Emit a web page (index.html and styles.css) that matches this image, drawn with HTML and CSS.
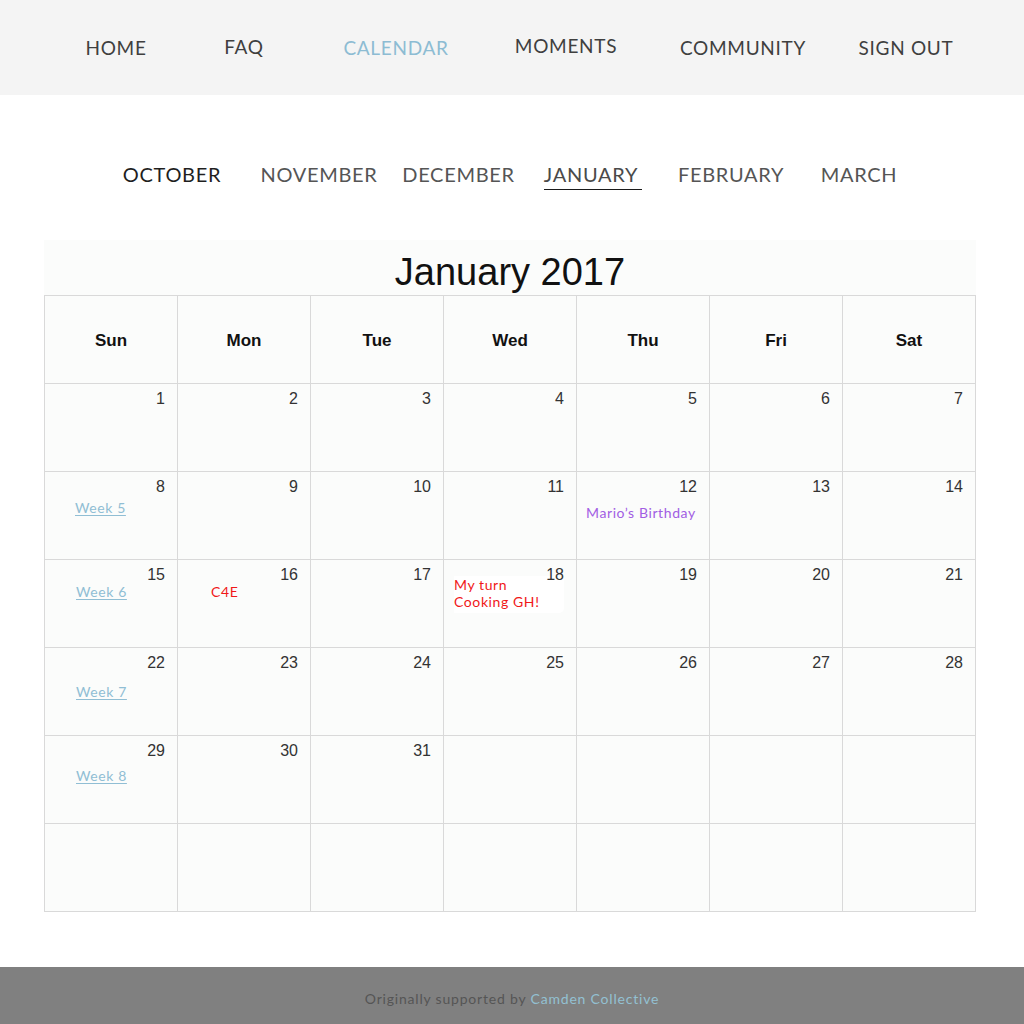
FILE: index.html
```html
<!DOCTYPE html>
<html lang="en">
<head>
<meta charset="utf-8">
<title>Calendar</title>
<link rel="stylesheet" href="styles.css">
</head>
<body>
<header class="topbar">
  <nav class="mainnav">
    <a class="navlink">HOME</a>
    <a class="navlink up1">FAQ</a>
    <a class="navlink active">CALENDAR</a>
    <a class="navlink up2">MOMENTS</a>
    <a class="navlink">COMMUNITY</a>
    <a class="navlink">SIGN OUT</a>
  </nav>
</header>
<main class="content">
  <nav class="months">
    <a class="month dark">OCTOBER</a>
    <a class="month">NOVEMBER</a>
    <a class="month">DECEMBER</a>
    <a class="month current">JANUARY</a>
    <a class="month">FEBRUARY</a>
    <a class="month">MARCH</a>
  </nav>
  <section class="calendar">
    <h1 class="cal-title">January 2017</h1>
    <div class="grid">
      <div class="dow">Sun</div><div class="dow">Mon</div><div class="dow">Tue</div><div class="dow">Wed</div><div class="dow">Thu</div><div class="dow">Fri</div><div class="dow">Sat</div>

      <div class="cell"><span class="num">1</span></div>
      <div class="cell"><span class="num">2</span></div>
      <div class="cell"><span class="num">3</span></div>
      <div class="cell"><span class="num">4</span></div>
      <div class="cell"><span class="num">5</span></div>
      <div class="cell"><span class="num">6</span></div>
      <div class="cell"><span class="num">7</span></div>

      <div class="cell"><span class="num">8</span><a class="week w5">Week 5</a></div>
      <div class="cell"><span class="num">9</span></div>
      <div class="cell"><span class="num">10</span></div>
      <div class="cell"><span class="num">11</span></div>
      <div class="cell"><span class="num">12</span><span class="event purple">Mario’s Birthday</span></div>
      <div class="cell"><span class="num">13</span></div>
      <div class="cell"><span class="num">14</span></div>

      <div class="cell"><span class="num">15</span><a class="week w6">Week 6</a></div>
      <div class="cell"><span class="num">16</span><span class="event red c4e">C4E</span></div>
      <div class="cell"><span class="num">17</span></div>
      <div class="cell"><span class="num">18</span><span class="event red cook">My turn<br>Cooking GH!</span></div>
      <div class="cell"><span class="num">19</span></div>
      <div class="cell"><span class="num">20</span></div>
      <div class="cell"><span class="num">21</span></div>

      <div class="cell"><span class="num">22</span><a class="week w7">Week 7</a></div>
      <div class="cell"><span class="num">23</span></div>
      <div class="cell"><span class="num">24</span></div>
      <div class="cell"><span class="num">25</span></div>
      <div class="cell"><span class="num">26</span></div>
      <div class="cell"><span class="num">27</span></div>
      <div class="cell"><span class="num">28</span></div>

      <div class="cell"><span class="num">29</span><a class="week w8">Week 8</a></div>
      <div class="cell"><span class="num">30</span></div>
      <div class="cell"><span class="num">31</span></div>
      <div class="cell"></div>
      <div class="cell"></div>
      <div class="cell"></div>
      <div class="cell"></div>

      <div class="cell"></div>
      <div class="cell"></div>
      <div class="cell"></div>
      <div class="cell"></div>
      <div class="cell"></div>
      <div class="cell"></div>
      <div class="cell"></div>
    </div>
  </section>
</main>
<footer class="footer">
  <p>Originally supported by <a class="footlink">Camden Collective</a></p>
</footer>
</body>
</html>
```

FILE: styles.css
```css
html, body {
  margin: 0;
  padding: 0;
  background: #ffffff;
}
body {
  font-family: "Lato", "Open Sans", sans-serif;
  width: 1024px;
  height: 1024px;
  overflow: hidden;
}
a { text-decoration: none; cursor: pointer; }

.topbar {
  height: 95px;
  background: #f4f4f4;
}
.mainnav {
  display: grid;
  grid-template-columns: 128px 128px 176px 164px 190px 136px;
  padding-left: 52px;
  height: 95px;
  align-items: center;
}
.navlink {
  justify-self: center;
  font-size: 19px;
  letter-spacing: 0.7px;
  color: #3f3f3f;
  line-height: 20px;
  position: relative;
  top: 0;
}
.navlink.up1 { top: -1px; }
.navlink.up2 { top: -2px; }
.navlink.active { color: #8dbcd3; }

.content {
  padding-top: 66px;
}
.months {
  display: grid;
  grid-template-columns: 150px 144px 135px 138px 134px 122px;
  padding-left: 97px;
  height: 34px;
  align-items: start;
}
.month {
  justify-self: center;
  font-size: 20px;
  letter-spacing: 0.7px;
  line-height: 26px;
  color: #555555;
  padding-bottom: 2px;
}
.month.dark { color: #1f1f1f; }
.month.current {
  color: #4a4a4a;
  border-bottom: 1.5px solid #1a1a1a;
  padding: 0 4px 2px 0;
  margin-left: -4px;
}

.calendar {
  margin: 45px 0 0 44px;
  width: 932px;
  background: #fbfcfb;
}
.cal-title {
  margin: 0;
  height: 55px;
  font-family: "Liberation Sans", Arial, sans-serif;
  font-weight: normal;
  font-size: 38px;
  line-height: 64px;
  text-align: center;
  color: #111111;
  overflow: hidden;
}
.grid {
  display: grid;
  grid-template-columns: repeat(7, 132px);
  grid-auto-rows: 87px;
  gap: 1px;
  padding: 1px;
  background: #d9d9d9;
}
.dow {
  background: #fbfcfb;
  font-family: "Liberation Sans", Arial, sans-serif;
  font-weight: bold;
  font-size: 17px;
  color: #111111;
  display: flex;
  align-items: center;
  justify-content: center;
  padding-top: 3px;
}
.cell {
  background: #fbfcfb;
  display: flex;
  flex-direction: column;
  padding: 6px 12px 0 10px;
}
.num {
  align-self: flex-end;
  font-family: "Liberation Sans", Arial, sans-serif;
  font-size: 16px;
  line-height: 18px;
  color: #333333;
  position: relative;
  z-index: 1;
}
.week, .event {
  font-size: 14px;
  line-height: 17px;
  letter-spacing: 0.6px;
}
.week {
  color: #90bed4;
  text-decoration: underline;
  text-underline-offset: 2px;
  align-self: flex-start;
}
.w5 { margin: 3px 0 0 20px; }
.w6 { margin: -1px 0 0 21px; }
.w7 { margin: 11px 0 0 21px; }
.w8 { margin: 7px 0 0 21px; }
.event.red { color: #f01818; }
.event.purple { color: #a25ee3; margin: 8px 0 0 -1px; }
.c4e { margin: -1px 0 0 23px; }
.cook {
  align-self: flex-start;
  white-space: nowrap;
  background: #ffffff;
  margin: -8px -12px 0 0;
  padding: 0 24px 3px 0;
  border-radius: 0 5px 5px 0;
  line-height: 17px;
}

.footer {
  position: absolute;
  left: 0;
  top: 967px;
  width: 1024px;
  height: 57px;
  background: #808080;
  display: flex;
  align-items: center;
  justify-content: center;
}
.footer p {
  margin: 0;
  font-size: 14px;
  letter-spacing: 0.8px;
  color: #555555;
  padding-top: 6px;
}
.footlink { color: #93c0d2; }
```
